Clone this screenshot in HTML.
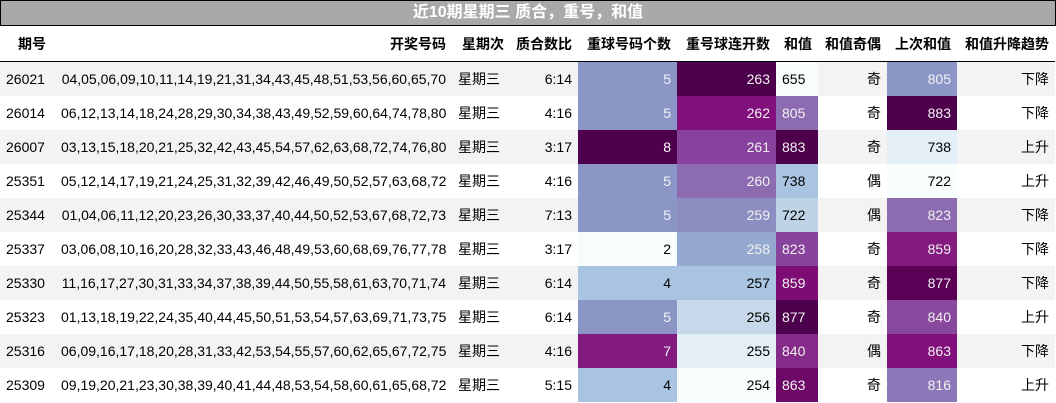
<!DOCTYPE html><html><head><meta charset="utf-8"><style>
body{margin:0;width:1056px;height:403px;background:#fff;font-family:"Liberation Sans","Noto Sans CJK SC",sans-serif;font-size:14px;color:#000;overflow:hidden}
.title{position:absolute;left:0;top:0;width:1054px;height:24px;background:#a9a9a9;border:1px solid #000;color:#fff;font-weight:bold;font-size:16px;text-align:center;line-height:24px}
table{position:absolute;left:0;top:26px;border-collapse:collapse;table-layout:fixed;width:1055px}
th{height:35px;font-weight:bold;text-align:right;padding:0 6px;border-bottom:1px solid #000;white-space:nowrap}
td{height:34px;padding:0 6px;text-align:right;white-space:nowrap}
tr.o td{background:#f3f3f3}
th.l,td.l{text-align:left}
.w{color:#f1f1f1}
</style></head><body>
<div class="title">近10期星期三 质合，重号，和值</div>
<table>
<colgroup><col style="width:55px"><col style="width:397px"><col style="width:58px"><col style="width:68px"><col style="width:99px"><col style="width:99px"><col style="width:42px"><col style="width:69px"><col style="width:70px"><col style="width:98px"></colgroup>
<tr><th class="l" style="padding-left:18px">期号</th><th>开奖号码</th><th>星期次</th><th>质合数比</th><th>重球号码个数</th><th>重号球连开数</th><th>和值</th><th>和值奇偶</th><th>上次和值</th><th>和值升降趋势</th></tr>
<tr class="o"><td class="l">26021</td><td>04,05,06,09,10,11,14,19,21,31,34,43,45,48,51,53,56,60,65,70</td><td class="l">星期三</td><td>6:14</td><td class="w" style="background:#8c96c6">5</td><td class="w" style="background:#4d004b">263</td><td class="l" style="background:#f7fcfd">655</td><td>奇</td><td class="w" style="background:#8c96c6">805</td><td>下降</td></tr>
<tr><td class="l">26014</td><td>06,12,13,14,18,24,28,29,30,34,38,43,49,52,59,60,64,74,78,80</td><td class="l">星期三</td><td>4:16</td><td class="w" style="background:#8c96c6">5</td><td class="w" style="background:#810f7c">262</td><td class="l w" style="background:#8c6bb1">805</td><td>奇</td><td class="w" style="background:#4d004b">883</td><td>下降</td></tr>
<tr class="o"><td class="l">26007</td><td>03,13,15,18,20,21,25,32,42,43,45,54,57,62,63,68,72,74,76,80</td><td class="l">星期三</td><td>3:17</td><td class="w" style="background:#4d004b;color:#fff">8</td><td class="w" style="background:#88419d">261</td><td class="l w" style="background:#4d004b">883</td><td>奇</td><td style="background:#e3eef6">738</td><td>上升</td></tr>
<tr><td class="l">25351</td><td>05,12,14,17,19,21,24,25,31,32,39,42,46,49,50,52,57,63,68,72</td><td class="l">星期三</td><td>4:16</td><td class="w" style="background:#8c96c6">5</td><td class="w" style="background:#8c6bb1">260</td><td class="l" style="background:#a8c4e0">738</td><td>偶</td><td style="background:#f7fcfd">722</td><td>上升</td></tr>
<tr class="o"><td class="l">25344</td><td>01,04,06,11,12,20,23,26,30,33,37,40,44,50,52,53,67,68,72,73</td><td class="l">星期三</td><td>7:13</td><td class="w" style="background:#8c96c6">5</td><td class="w" style="background:#8c8dc1">259</td><td class="l" style="background:#bfd3e6">722</td><td>偶</td><td class="w" style="background:#8c6bb1">823</td><td>下降</td></tr>
<tr><td class="l">25337</td><td>03,06,08,10,16,20,28,32,33,43,46,48,49,53,60,68,69,76,77,78</td><td class="l">星期三</td><td>3:17</td><td style="background:#f7fcfd">2</td><td class="w" style="background:#94a8d0">258</td><td class="l w" style="background:#88449d">823</td><td>奇</td><td class="w" style="background:#821a80">859</td><td>下降</td></tr>
<tr class="o"><td class="l">25330</td><td>11,16,17,27,30,31,33,34,37,38,39,44,50,55,58,61,63,70,71,74</td><td class="l">星期三</td><td>6:14</td><td style="background:#a8c4e0">4</td><td style="background:#a8c4e0">257</td><td class="l w" style="background:#7d0c74">859</td><td>奇</td><td class="w" style="background:#5a0055">877</td><td>下降</td></tr>
<tr><td class="l">25323</td><td>01,13,18,19,22,24,35,40,44,45,50,51,53,54,57,63,69,71,73,75</td><td class="l">星期三</td><td>6:14</td><td class="w" style="background:#8c96c6">5</td><td style="background:#c6d8ea">256</td><td class="l w" style="background:#4d004b">877</td><td>奇</td><td class="w" style="background:#88489e">840</td><td>上升</td></tr>
<tr class="o"><td class="l">25316</td><td>06,09,16,17,18,20,28,31,33,42,53,54,55,57,60,62,65,67,72,75</td><td class="l">星期三</td><td>4:16</td><td class="w" style="background:#821a80">7</td><td style="background:#e3eef6">255</td><td class="l w" style="background:#862a8a">840</td><td>偶</td><td class="w" style="background:#810f7c">863</td><td>下降</td></tr>
<tr><td class="l">25309</td><td>09,19,20,21,23,30,38,39,40,41,44,48,53,54,58,60,61,65,68,72</td><td class="l">星期三</td><td>5:15</td><td style="background:#a8c4e0">4</td><td style="background:#f7fcfd">254</td><td class="l w" style="background:#6d0768">863</td><td>奇</td><td class="w" style="background:#8c78b8">816</td><td>上升</td></tr>
</table>
</body></html>
